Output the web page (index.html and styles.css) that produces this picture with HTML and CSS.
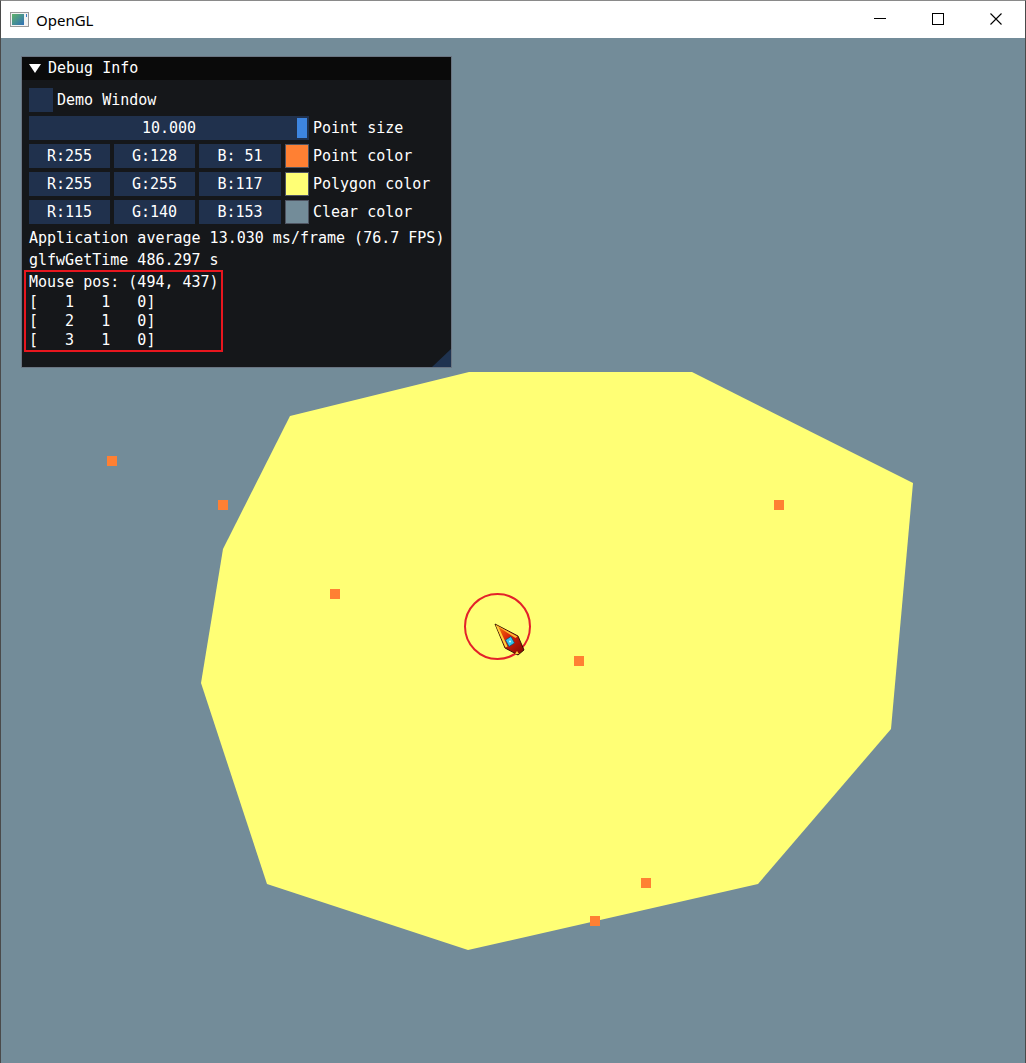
FILE: index.html
```html
<!DOCTYPE html>
<html>
<head>
<meta charset="utf-8">
<link rel="stylesheet" href="styles.css">
</head>
<body>
<div class="window">
  <div class="titlebar">
    <svg class="app-icon" width="19" height="15" viewBox="0 0 19 15">
      <defs>
        <linearGradient id="ig" x1="0" y1="0" x2="1" y2="1">
          <stop offset="0" stop-color="#5fb36a"/>
          <stop offset="1" stop-color="#2f6fb8"/>
        </linearGradient>
      </defs>
      <rect x="0.5" y="0.5" width="18" height="14" fill="#f2f2f2" stroke="#9a9a9a"/>
      <rect x="2" y="2" width="12" height="11" fill="url(#ig)"/>
      <rect x="16" y="2" width="1" height="3" fill="#3a7cc8"/>
    </svg>
    <span class="title">OpenGL</span>
    <div class="controls">
      <div class="ctl"><svg width="12" height="12" viewBox="0 0 12 12"><rect x="0" y="5" width="12" height="1" fill="#000"/></svg></div>
      <div class="ctl"><svg width="12" height="12" viewBox="0 0 12 12"><rect x="0.5" y="0.5" width="11" height="11" fill="none" stroke="#000"/></svg></div>
      <div class="ctl"><svg width="12" height="12" viewBox="0 0 12 12"><path d="M0.5 0.5 L11.5 11.5 M11.5 0.5 L0.5 11.5" stroke="#000" stroke-width="1.1"/></svg></div>
    </div>
  </div>
  <div class="content">
    <svg class="scene" width="1024" height="1025" viewBox="1 38 1024 1025">
      <defs>
        <linearGradient id="cg" x1="0" y1="0" x2="1" y2="1">
          <stop offset="0" stop-color="#ff8a10"/>
          <stop offset="0.45" stop-color="#d82008"/>
          <stop offset="1" stop-color="#7a0804"/>
        </linearGradient>
      </defs>
      <polygon class="poly" points="290,416 469,372 692,372 913,483 891,729 758,884 468,950 267,884 201,683 223,549"/>
      <g class="pts">
        <rect x="107" y="456" width="10" height="10"/>
        <rect x="218" y="500" width="10" height="10"/>
        <rect x="330" y="589" width="10" height="10"/>
        <rect x="774" y="500" width="10" height="10"/>
        <rect x="574" y="656" width="10" height="10"/>
        <rect x="641" y="878" width="10" height="10"/>
        <rect x="590" y="916" width="10" height="10"/>
      </g>
      <circle cx="497.5" cy="626.5" r="32.5" fill="none" stroke="#e3222a" stroke-width="2"/>
      <g class="cursor">
        <path d="M495,624 L518,636 L524,650 L518,655 L505,648 Z" fill="url(#cg)" stroke="#2a0a00" stroke-width="0.9"/>
        <path d="M495.5,624.8 L505.5,647.5 L507.5,646.5 L498.5,627 Z" fill="#ffd23a"/>
        <path d="M495.5,624.8 L517.5,636.5 L515.5,638 L498.5,627 Z" fill="#ffb830"/>
        <path d="M517,651 L519,654 L515,654 Z" fill="#ffd23a"/>
        <path d="M505.5,640 L511,636.5 L514.5,643 L509,646.5 Z" fill="#35c4ec" stroke="#0b4a70" stroke-width="0.7"/>
        <circle cx="510" cy="641.5" r="1" fill="#e8fbff"/>
      </g>
    </svg>
    <div class="panel">
      <div class="ptitle">
        <svg class="arrow" width="12" height="9" viewBox="0 0 12 9"><polygon points="0,0 12,0 6,9" fill="#fff"/></svg>
        <span>Debug Info</span>
      </div>
      <div class="pbody">
        <div class="row"><span class="checkbox"></span><span class="label">Demo Window</span></div>
        <div class="row">
          <div class="slider"><span>10.000</span><span class="grab"></span></div>
          <span class="label">Point size</span>
        </div>
        <div class="row">
          <span class="box">R:255</span><span class="box">G:128</span><span class="box wide">B: 51</span>
          <span class="swatch sw-point"></span><span class="label">Point color</span>
        </div>
        <div class="row">
          <span class="box">R:255</span><span class="box">G:255</span><span class="box wide">B:117</span>
          <span class="swatch sw-poly"></span><span class="label">Polygon color</span>
        </div>
        <div class="row">
          <span class="box">R:115</span><span class="box">G:140</span><span class="box wide">B:153</span>
          <span class="swatch sw-clear"></span><span class="label">Clear color</span>
        </div>
        <div class="line first">Application average 13.030 ms/frame (76.7 FPS)</div>
        <div class="line">glfwGetTime 486.297 s</div>
        <div class="group">
          <div class="line">Mouse pos: (494, 437)</div>
          <div class="mat">[   1   1   0]
[   2   1   0]
[   3   1   0]</div>
        </div>
      </div>
      <svg class="grip" width="19" height="18" viewBox="0 0 19 18"><polygon points="19,0 19,18 0,18" fill="#1f3350"/></svg>
    </div>
  </div>
</div>
</body>
</html>
```
FILE: styles.css
```css
html, body {
  margin: 0;
  padding: 0;
}
body {
  width: 1026px;
  height: 1063px;
  overflow: hidden;
  background: #738c99;
}
.window {
  width: 1026px;
  height: 1063px;
  box-sizing: border-box;
  border-left: 1px solid #4a4a4a;
  border-right: 1px solid #4a4a4a;
  border-top: 1px solid #8a8a8a;
  display: flex;
  flex-direction: column;
}
.titlebar {
  height: 37px;
  flex: none;
  background: #fff;
  display: flex;
  align-items: center;
}
.app-icon {
  margin-left: 9px;
  flex: none;
}
.title {
  margin-left: 7px;
  font-family: "Noto Sans", "Noto Sans CJK SC", sans-serif;
  font-size: 15px;
  color: #000;
  line-height: 20px;
}
.controls {
  margin-left: auto;
  display: flex;
  height: 100%;
}
.ctl {
  width: 58px;
  height: 100%;
  display: flex;
  align-items: center;
  justify-content: center;
}
.ctl svg {
  margin-top: -1px;
}
.content {
  flex: 1;
  position: relative;
  background: #738c99;
  overflow: hidden;
}
.scene {
  position: absolute;
  left: 0;
  top: 0;
}
.poly {
  fill: #ffff75;
}
.pts rect {
  fill: #ff8033;
}
.panel {
  position: absolute;
  left: 20px;
  top: 18px;
  width: 431px;
  height: 312px;
  box-sizing: border-box;
  border: 1px solid #6a7582;
  background: #15171a;
  display: flex;
  flex-direction: column;
  font-family: "DejaVu Sans Mono", monospace;
  font-size: 15px;
  color: #fff;
}
.ptitle {
  height: 23px;
  flex: none;
  box-sizing: border-box;
  background: #0a0a0a;
  display: flex;
  align-items: center;
  padding-left: 7px;
  padding-bottom: 1px;
  gap: 7px;
}
.ptitle .arrow {
  margin-top: 1px;
}
.ptitle span {
  line-height: 18px;
}
.pbody {
  padding: 8px 0 0 7px;
  display: flex;
  flex-direction: column;
  gap: 4px;
}
.row {
  height: 24px;
  display: flex;
  align-items: center;
  gap: 4px;
}
.checkbox {
  width: 24px;
  height: 24px;
  background: #20314d;
}
.label {
  line-height: 18px;
}
.slider {
  width: 280px;
  height: 24px;
  background: #20314d;
  position: relative;
  display: flex;
  align-items: center;
  justify-content: center;
}
.grab {
  position: absolute;
  right: 2px;
  top: 2px;
  width: 10px;
  height: 20px;
  background: #3d85e0;
}
.box {
  width: 81px;
  height: 24px;
  background: #20314d;
  display: flex;
  align-items: center;
  justify-content: center;
  white-space: pre;
}
.box.wide {
  width: 82px;
}
.swatch {
  width: 24px;
  height: 24px;
  box-sizing: border-box;
  border: 1px solid #4f5562;
}
.sw-point { background: #ff8033; }
.sw-poly { background: #ffff75; }
.sw-clear { background: #738c99; }
.line {
  height: 18px;
  line-height: 18px;
  white-space: pre;
}
.line.first {
  margin-top: 1px;
}
.group {
  margin-top: -3px;
  margin-left: -5px;
  width: 199px;
  box-sizing: border-box;
  border: 2px solid #e8161e;
  padding: 1px 0 0 3px;
}
.mat {
  margin-top: 2px;
  line-height: 19px;
  white-space: pre;
}
.grip {
  position: absolute;
  right: 0;
  bottom: 0;
}
```
